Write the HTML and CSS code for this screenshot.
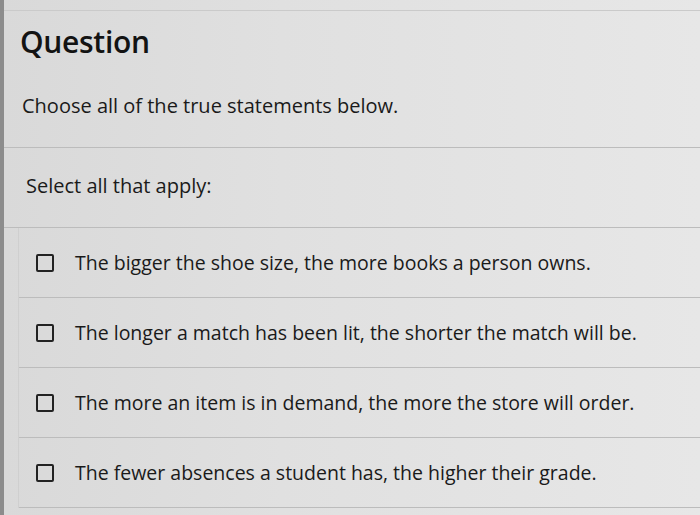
FILE: index.html
```html
<!DOCTYPE html>
<html>
<head>
<meta charset="utf-8">
<link rel="stylesheet" href="styles.css">
</head>
<body>
<div class="page">
  <div class="panel">
    <h1 class="title">Question</h1>
    <p class="prompt">Choose all of the true statements below.</p>
    <div class="divider"></div>
    <p class="instr">Select all that apply:</p>
    <div class="divider"></div>
    <ul class="options">
      <li class="option"><span class="box"></span><span class="label">The bigger the shoe size, the more books a person owns.</span></li>
      <li class="option"><span class="box"></span><span class="label">The longer a match has been lit, the shorter the match will be.</span></li>
      <li class="option"><span class="box"></span><span class="label">The more an item is in demand, the more the store will order.</span></li>
      <li class="option"><span class="box"></span><span class="label">The fewer absences a student has, the higher their grade.</span></li>
    </ul>
  </div>
</div>
</body>
</html>
```
FILE: styles.css
```css
html, body {
  margin: 0;
  padding: 0;
  width: 700px;
  height: 515px;
  overflow: hidden;
  background: #dedede;
}
.page {
  height: 515px;
  display: flex;
  border-left: 4px solid #8c8c8c;
  background: linear-gradient(90deg, #d9d9d9 0%, #e0e0e0 40%, #e7e7e7 100%);
  font-family: "Open Sans", "Liberation Sans", sans-serif;
  color: #1a1a1a;
}
.panel {
  flex: 1;
  border-top: 1px solid #cacaca;
  margin-top: 10px;
  display: flex;
  flex-direction: column;
}
.title {
  margin: 10px 0 0 16px;
  font-size: 30px;
  font-weight: 600;
  line-height: 42px;
  letter-spacing: -0.3px;
  color: #131313;
}
.prompt {
  margin: 29px 0 0 18px;
  font-size: 20px;
  line-height: 28px;
  height: 55px;
}
.divider {
  height: 0;
  border-top: 1px solid #bcbcbc;
}
.instr {
  margin: 24px 0 0 22px;
  font-size: 20px;
  line-height: 28px;
  height: 55px;
}
.options {
  list-style: none;
  margin: 0 0 0 14px;
  padding: 0;
  border-left: 1px solid #cfcfcf;
}
.option {
  display: flex;
  align-items: center;
  height: 69px;
  border-bottom: 1px solid #bcbcbc;
  padding-left: 17px;
}
.box {
  box-sizing: border-box;
  width: 18px;
  height: 18px;
  border: 2px solid #222;
  border-radius: 2px;
  flex: none;
}
.label {
  margin-left: 21px;
  font-size: 19.5px;
  line-height: 26px;
  color: #1a1a1a;
}
```
